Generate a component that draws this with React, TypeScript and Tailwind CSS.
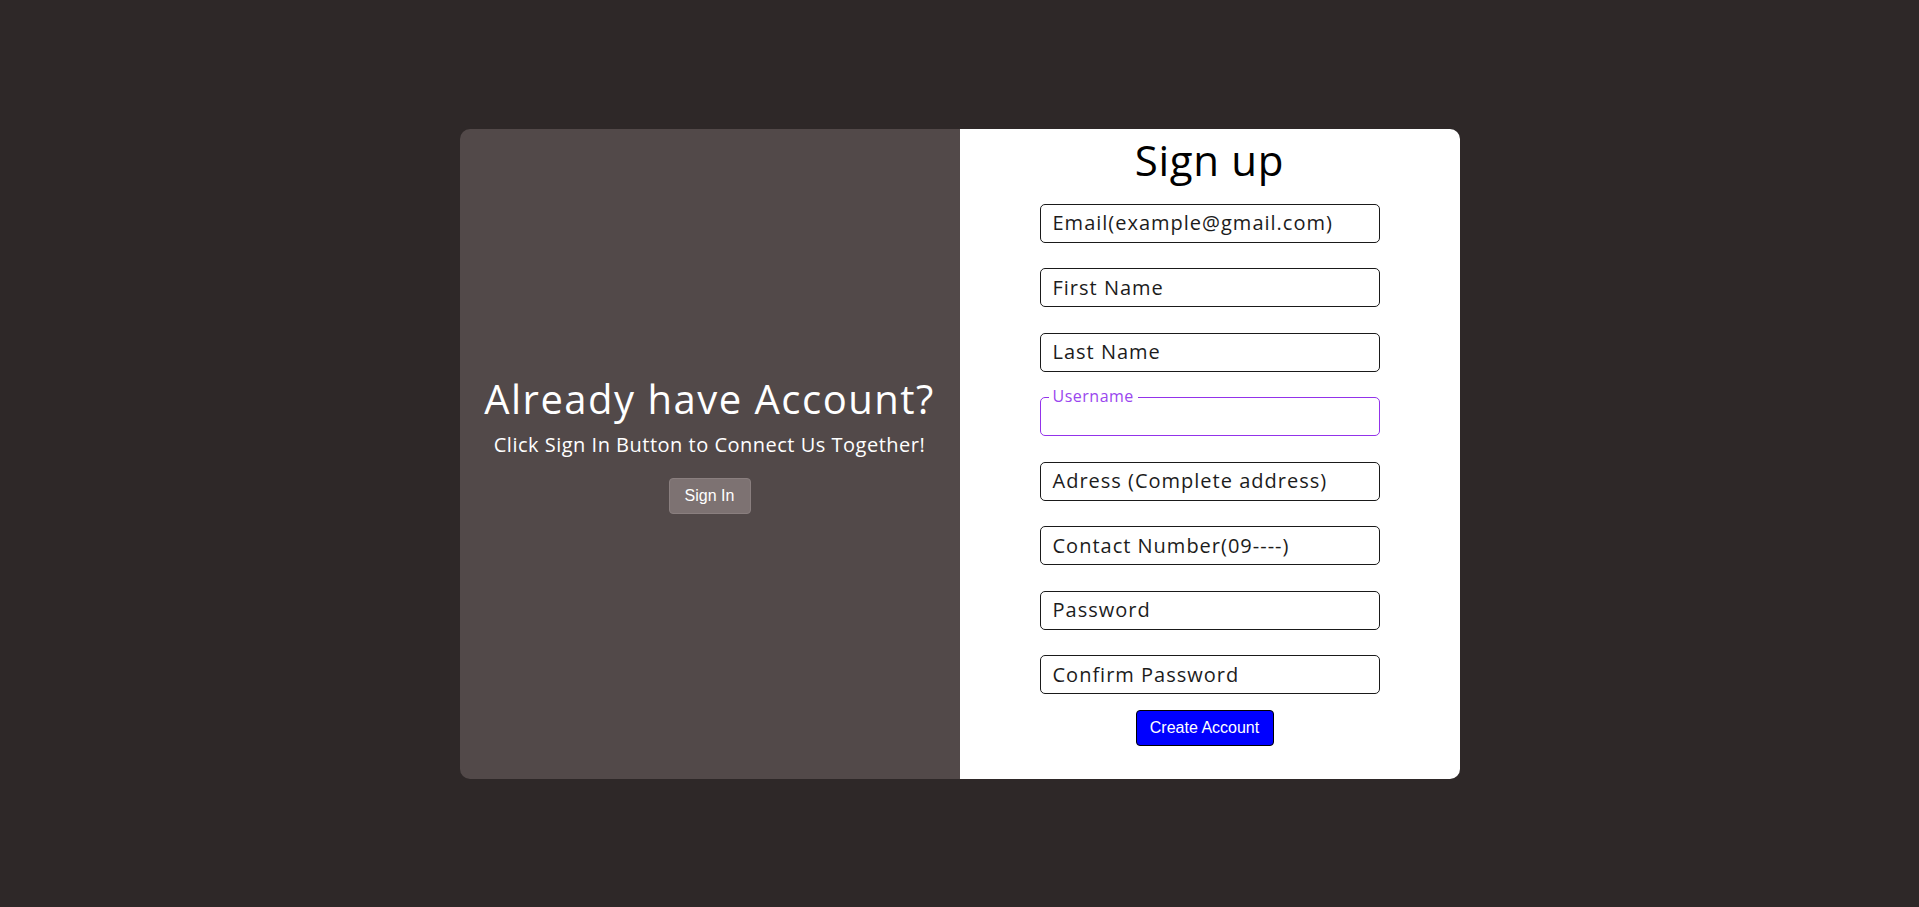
import React from "react";

const fields = [
  "Email(example@gmail.com)",
  "First Name",
  "Last Name",
  "__username__",
  "Adress (Complete address)",
  "Contact Number(09----)",
  "Password",
  "Confirm Password",
];

export default function App() {
  return (
    <div
      className="min-h-[907px] w-full bg-[#2e2828] flex items-center justify-center"
      style={{ fontFamily: '"Open Sans", "Noto Sans", sans-serif' }}
    >
      <div className="w-[1000px] h-[650px] flex rounded-[10px] overflow-hidden">
        <div className="w-1/2 h-full bg-[#524949] flex flex-col items-center justify-center text-white pb-[18px]">
          <h2 className="text-[40px] leading-[46px] font-normal tracking-[1.5px]">Already have Account?</h2>
          <p className="text-[20px] leading-[26px] mt-[10px] tracking-[0.5px]">Click Sign In Button to Connect Us Together!</p>
          <button
            className="mt-[20px] h-[36px] w-[82px] rounded-[4px] bg-[#7d7272] border border-[#8a7f7f] text-white text-[16px]"
            style={{ fontFamily: '"Liberation Sans", Arial, sans-serif' }}
          >
            Sign In
          </button>
        </div>
        <div className="w-1/2 h-full bg-white flex flex-col items-center pt-[3px]">
          <h1 className="text-[42px] leading-[56px] text-black font-normal tracking-[0.7px]">Sign up</h1>
          <div className="mt-[16px] flex flex-col gap-[25.5px] w-[340px]">
            {fields.map((f) =>
              f === "__username__" ? (
                <div
                  key={f}
                  className="relative h-[39px] rounded-[5px] border border-[#9333ea]"
                >
                  <span className="absolute left-[8px] top-[-12px] bg-white px-[4px] text-[16px] leading-[20px] tracking-[0.5px] text-[#9a46ee]">
                    Username
                  </span>
                </div>
              ) : (
                <div
                  key={f}
                  className="h-[39px] rounded-[5px] border border-[#1a1a1a] flex items-center pl-[12px] text-[20px] tracking-[1px] text-[#1c1c1c] whitespace-nowrap"
                >
                  {f}
                </div>
              )
            )}
          </div>
          <button
            className="mt-[15.5px] h-[36px] w-[138px] rounded-[4px] bg-[#0000ff] border border-black text-white text-[16px] ml-[-10px]"
            style={{ fontFamily: '"Liberation Sans", Arial, sans-serif' }}
          >
            Create Account
          </button>
        </div>
      </div>
    </div>
  );
}
